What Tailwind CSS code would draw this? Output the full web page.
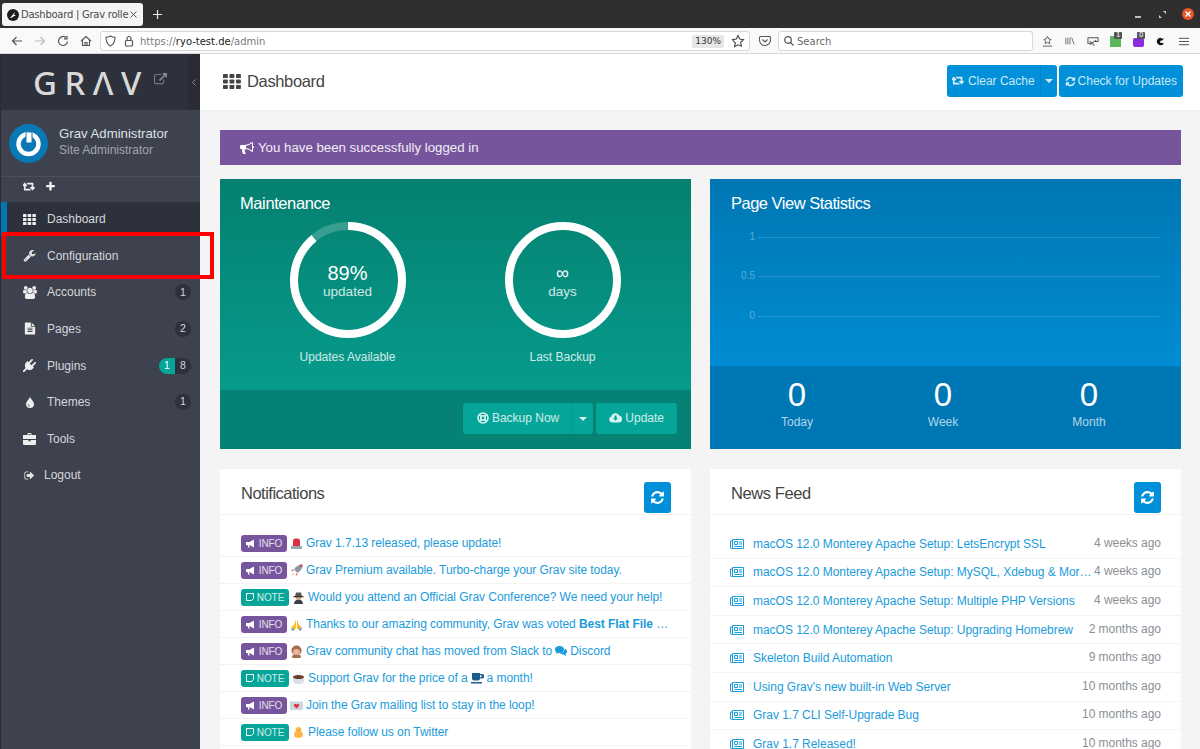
<!DOCTYPE html>
<html lang="en">
<head>
  <title>Dashboard | Grav</title>
  <meta charset="UTF-8">
  <script src="https://cdn.jsdelivr.net/npm/@tailwindcss/browser@4"></script>
</head>
<body class="h-[749px] w-[1200px] overflow-hidden relative flex flex-col bg-[#f4f4f4] font-['Liberation_Sans',sans-serif] text-[13px]">

  <!-- Browser title bar -->
  <div class="h-[28px] shrink-0 bg-[#2f2d2e] flex items-start pl-[2px] font-['DejaVu_Sans',sans-serif]">
    <div class="mt-[3px] w-[141px] h-[23px] bg-[#f5f5f5] rounded-[3px] flex items-center pl-[5px] pr-[6px] text-[10px] text-[#4a4a4a]">
      <svg class="w-[12px] h-[12px] shrink-0" viewBox="0 0 12 12"><circle cx="6" cy="6" r="6" fill="#1d1d1d"/><path d="M3 9 8 3 7 6 9 6 4 9z" fill="#fff"/></svg>
      <span class="ml-[2px] whitespace-nowrap tracking-[-0.25px] text-[#4a4a4a]">Dashboard | Grav rolle</span>
      <svg class="ml-auto w-[7px] h-[7px] shrink-0" viewBox="0 0 7 7" stroke="#555"><path d="M.5.5l6 6M6.5.5l-6 6"/></svg>
    </div>
    <svg class="ml-[10px] mt-[10px] w-[9px] h-[9px]" viewBox="0 0 9 9"><path d="M4.5 0v9M0 4.5h9" stroke="#e8e8e8" stroke-width="1.2"/></svg>
    <div class="ml-auto flex items-center mt-[8px] mr-[6px]">
      <div class="w-[6px] h-[2px] bg-[#bdbdbd] mt-[5px] mr-[18px]"></div>
      <svg class="w-[7px] h-[7px] mr-[16px]" viewBox="0 0 7 7"><path d="M4 0h3v3zM0 4l3 3H0z" fill="#d0d0d0"/></svg>
      <div class="w-[12px] h-[12px] rounded-full bg-[#e4572a] flex items-center justify-center">
        <svg class="w-[6px] h-[6px]" viewBox="0 0 6 6"><path d="M.5.5l5 5M5.500.5l-5 5" stroke="#fff" stroke-width="1.4"/></svg>
      </div>
    </div>
  </div>

  <!-- Browser toolbar -->
  <div class="h-[26px] shrink-0 bg-[#f9f9fa] border-b border-[#d8d8da] flex items-center pt-[1px] font-['DejaVu_Sans',sans-serif] text-[10px] text-[#5a5a5a]">
    <div class="w-[100px] shrink-0 flex items-center pl-[11px] gap-[11px]">
      <svg class="w-[12px] h-[12px]" viewBox="0 0 12 12" fill="none" stroke="#555" stroke-width="1.2"><path d="M11 6H1.500M5.500 2 1.500 6l4 4"/></svg>
      <svg class="w-[12px] h-[12px]" viewBox="0 0 12 12" fill="none" stroke="#bbb" stroke-width="1.2"><path d="M1 6h9.500M6.500 2l4 4-4 4"/></svg>
      <svg class="w-[12px] h-[12px]" viewBox="0 0 12 12" fill="none" stroke="#555" stroke-width="1.2"><path d="M10.500 6.500A4.500 4.500 0 1 1 9 2.600M10 .8v3H7"/></svg>
      <svg class="w-[12px] h-[12px]" viewBox="0 0 12 12" fill="none" stroke="#555" stroke-width="1.1"><path d="M1 6 6 1.500 11 6M2.500 5v5.500h7V5M5 10.500V7.500h2v3"/></svg>
    </div>
    <div class="w-[650px] h-[20px] bg-white border border-[#d8d8da] rounded-[3px] flex items-center pl-[4px] pr-[3px]">
      <svg class="w-[11px] h-[12px]" viewBox="0 0 11 12" fill="none" stroke="#555" stroke-width="1.1"><path d="M5.500 1C4 2 2.500 2.300 1 2.300c0 4.500 1.800 7.500 4.500 8.700C8.200 9.800 10 6.800 10 2.300 8.500 2.300 7 2 5.500 1z"/></svg>
      <svg class="ml-[8px] w-[10px] h-[12px]" viewBox="0 0 10 12" fill="none" stroke="#555" stroke-width="1.2"><rect x="1.500" y="5.500" width="7" height="5.500" rx="1"/><path d="M3 5.500V3.500a2 2 0 0 1 4 0v2"/></svg>
      <span class="ml-[6px] text-[#7a7a7a]">https://<span class="text-[#222]">ryo-test.de</span>/admin</span>
      <span class="ml-auto bg-[#e6e6e7] text-[#333] text-[9px] rounded-[2px] h-[13px] leading-[13px] px-[3px]">130%</span>
      <svg class="ml-[7px] mr-[1px] w-[14px] h-[14px]" viewBox="0 0 14 14" fill="none" stroke="#444" stroke-width="1.1"><path d="M7 1.500l1.700 3.600 3.800.5-2.800 2.700.7 3.900L7 10.800l-3.400 1.900.7-3.900L1.500 5.600l3.800-.5z"/></svg>
    </div>
    <svg class="ml-[9px] w-[12px] h-[12px]" viewBox="0 0 12 12" fill="none" stroke="#555" stroke-width="1.1"><path d="M1.500 1.500h9a1 1 0 0 1 1 1V5a5.500 5.500 0 0 1-11 0V2.500a1 1 0 0 1 1-1zM3.500 4.500 6 7l2.500-2.500"/></svg>
    <div class="ml-[7px] w-[255px] h-[20px] bg-white border border-[#d8d8da] rounded-[3px] flex items-center pl-[5px]">
      <svg class="w-[10px] h-[10px]" viewBox="0 0 10 10" fill="none" stroke="#555" stroke-width="1.2"><circle cx="4" cy="4" r="3.300"/><path d="M6.500 6.500 9.500 9.500"/></svg>
      <span class="ml-[3px] text-[#6a6a6a]">Search</span>
    </div>
    <div class="ml-[9px] flex items-center">
      <svg class="w-[11px] h-[13px]" viewBox="0 0 12 13" fill="none" stroke="#555"><path d="M6 1l1.400 2.800 2.600.4-2 2 .5 2.600L6 7.600 3.500 8.800 4 6.200l-2-2 2.600-.4zM1 11.500h10"/></svg>
      <svg class="ml-[12px] w-[10px] h-[10px]" viewBox="0 0 12 10" fill="none" stroke="#666" stroke-width="1.1"><path d="M1 1v8M3.500 1v8M6 1v8M8 1l3 8"/></svg>
      <svg class="ml-[12px] w-[12px] h-[12px]" viewBox="0 0 13 12" fill="none" stroke="#555" stroke-width="1.1"><path d="M1 2.500h11v4H8M1 2.500v6h3M3 10l7-5M3 6l5 5"/></svg>
      <div class="ml-[11px] relative w-[11px] h-[11px] bg-[#5cb85c]">
        <span class="absolute -top-[4px] left-[4px] bg-[#555] text-white text-[7px] leading-[7px] px-[2px] rounded-[1px]">1</span>
      </div>
      <div class="ml-[12px] relative w-[11px] h-[9px] mt-[2px] bg-[#8a2be2] rounded-[2px]">
        <span class="absolute -top-[6px] left-[4px] bg-[#555] text-white text-[7px] leading-[7px] px-[2px] rounded-[1px]">0</span>
      </div>
      <svg class="ml-[12px] w-[9px] h-[11px]" viewBox="0 0 11 11"><path d="M6 1c-3 0-5 2-5 4.500S3 10 6 10c2 0 3-1 3.500-2L7 7 5.500 7.500 5 5l3-1 1.500-1.500-1-1-1 .8z" fill="#111"/></svg>
      <svg class="ml-[14px] w-[10px] h-[9px]" viewBox="0 0 11 9" stroke="#555" stroke-width="1.1"><path d="M0 1h11M0 4.500h11M0 8h11"/></svg>
    </div>
  </div>

  <div class="flex-1 flex min-h-0">
    <!-- Sidebar -->
    <aside class="w-[200px] shrink-0 bg-[#3d424e] border-l border-[#2a2d35] text-[#d5d7db] flex flex-col">
      <div class="h-[56px] bg-[#2d313b] flex">
        <div class="flex-1 flex items-center pl-[32px]">
          <span aria-label="GRAV" class="font-['Noto_Sans',sans-serif] text-[33px] leading-none font-medium tracking-[7.5px] text-[#d9d9d9]">GRΛV</span>
          <svg class="ml-[5px] mt-[-6px] w-[13px] h-[13px]" viewBox="0 0 1792 1792" fill="#858892"><path d="M1408 928v320q0 119-84.500 203.500t-203.500 84.500h-832q-119 0-203.500-84.500t-84.500-203.500v-832q0-119 84.500-203.500t203.500-84.500h704q14 0 23 9t9 23v64q0 14-9 23t-23 9h-704q-66 0-113 47t-47 113v832q0 66 47 113t113 47h832q66 0 113-47t47-113v-320q0-14 9-23t23-9h64q14 0 23 9t9 23zm384-864v512q0 26-19 45t-45 19-45-19l-176-176-652 652q-10 10-23 10t-23-10l-114-114q-10-10-10-23t10-23l652-652-176-176q-19-19-19-45t19-45 45-19h512q26 0 45 19t19 45z"/></svg>
        </div>
        <div class="w-[12px] bg-[#292c35] flex items-center justify-center">
          <svg class="w-[4px] h-[7px]" viewBox="0 0 4 7" fill="none" stroke="#8b8e96"><path d="M3.500.5.500 3.500l3 3"/></svg>
        </div>
      </div>

      <div class="h-[67px] flex items-center pl-[8px] border-b border-[#4a4f5b]">
        <svg class="w-[39px] h-[39px] shrink-0" viewBox="0 0 39 39">
          <circle cx="19.500" cy="19.500" r="19.500" fill="#0b78b6"/>
          <circle cx="19.500" cy="20" r="10" fill="none" stroke="#fff" stroke-width="4.500"/>
          <rect x="17" y="8" width="6" height="11" rx="1.500" fill="#fff" stroke="#0b78b6" stroke-width="1"/>
        </svg>
        <div class="ml-[11px] mb-[3px]">
          <div class="text-[#dfe0e3] text-[13.2px] leading-[17px]">Grav Administrator</div>
          <div class="text-[#a3a6ad] text-[12px] leading-[16px]">Site Administrator</div>
        </div>
      </div>

      <div class="h-[25px] flex items-start pl-[22px] pt-[4px] gap-[9px]">
        <svg class="w-[13px] h-[12px]" viewBox="0 0 1920 1792" fill="#eee"><path d="M1152 1376q0 13-9.500 22.500t-22.500 9.500h-960q-8 0-13.500-2t-9-7-5.500-8-3-11.500-1-11.500v-600h-192q-26 0-45-19t-19-45q0-24 15-41l320-384q19-22 49-22t49 22l320 384q15 17 15 41 0 26-19 45t-45 19h-192v384h576q16 0 25 11l160 192q7 10 7 21zm640-416q0 24-15 41l-320 384q-20 23-49 23t-49-23l-320-384q-15-17-15-41 0-26 19-45t45-19h192v-384h-576q-16 0-25-12l-160-192q-7-9-7-20 0-13 9.500-22.500t22.500-9.500h960q8 0 13.500 2t9 7 5.500 8 3 11.500 1 11.500v600h192q26 0 45 19t19 45z"/></svg>
        <svg class="w-[11px] h-[11px]" viewBox="0 0 1792 1792" fill="#f2f2f2"><path d="M1600 736v192q0 40-28 68t-68 28h-416v416q0 40-28 68t-68 28h-192q-40 0-68-28t-28-68v-416h-416q-40 0-68-28t-28-68v-192q0-40 28-68t68-28h416v-416q0-40 28-68t68-28h192q40 0 68 28t28 68v416h416q40 0 68 28t28 68z"/></svg>
      </div>

      <nav class="text-[12px]">
        <div class="h-[34px] bg-[#2d313b] border-l-[6px] border-[#0077b5] flex items-center pl-[16px] mb-[1.5px]">
          <svg class="w-[13px] h-[11px] shrink-0" viewBox="0 0 13 11" fill="#eee"><rect width="3.500" height="3" rx=".5"/><rect x="4.700" width="3.500" height="3" rx=".5"/><rect x="9.400" width="3.500" height="3" rx=".5"/><rect y="4" width="3.500" height="3" rx=".5"/><rect x="4.700" y="4" width="3.500" height="3" rx=".5"/><rect x="9.400" y="4" width="3.500" height="3" rx=".5"/><rect y="8" width="3.500" height="3" rx=".5"/><rect x="4.700" y="8" width="3.500" height="3" rx=".5"/><rect x="9.400" y="8" width="3.500" height="3" rx=".5"/></svg>
          <span class="ml-[11px]">Dashboard</span>
        </div>
        <div class="h-[36.6px] flex items-center pl-[22px]">
          <svg class="w-[13px] h-[13px] shrink-0" viewBox="0 0 1792 1792" fill="#e4e4e4"><path d="M448 1472q0-26-19-45t-45-19-45 19-19 45 19 45 45 19 45-19 19-45zm644-420l-682 682q-37 37-90 37-52 0-91-37l-106-108q-38-36-38-90 0-53 38-91l681-681q39 98 114.500 173.500t173.500 114.500zm634-435q0 39-23 106-47 134-164.500 217.500t-258.500 83.500q-185 0-316.500-131.500t-131.500-316.500 131.500-316.500 316.500-131.500q58 0 121.500 16.500t107.500 46.500q16 11 16 28t-16 28l-293 169v224l193 107q5-3 79-48.500t135.500-81 70.500-35.500q15 0 23.500 10t8.500 25z"/></svg>
          <span class="ml-[11px]">Configuration</span>
        </div>
        <div class="h-[36.6px] flex items-center pl-[22px]">
          <svg class="w-[14px] h-[13px] shrink-0" viewBox="0 0 1920 1792" fill="#eee"><path d="M593 896q-162 5-265 128h-134q-82 0-138-40.500t-56-118.500q0-353 124-353 6 0 43.500 21t97.500 42.500 119 21.500q67 0 133-23-5 37-5 66 0 139 81 256zm1071 637q0 120-73 189.500t-194 69.500h-874q-121 0-194-69.500t-73-189.500q0-53 3.500-103.500t14-109 26.500-108.500 43-97.500 62-81 85.500-53.500 111.500-20q10 0 43 21.500t73 48 107 48 135 21.500 135-21.500 107-48 73-48 43-21.500q61 0 111.500 20t85.500 53.500 62 81 43 97.500 26.500 108.500 14 109 3.500 103.500zm-1024-1277q0 106-75 181t-181 75-181-75-75-181 75-181 181-75 181 75 75 181zm704 384q0 159-112.500 271.500t-271.500 112.500-271.500-112.500-112.500-271.500 112.500-271.500 271.500-112.500 271.500 112.500 112.500 271.500zm576 225q0 78-56 118.500t-138 40.500h-134q-103-123-265-128 81-117 81-256 0-29-5-66 66 23 133 23 59 0 119-21.500t97.500-42.500 43.500-21q124 0 124 353zm-128-609q0 106-75 181t-181 75-181-75-75-181 75-181 181-75 181 75 75 181z"/></svg>
          <span class="ml-[10px]">Accounts</span>
          <span class="ml-auto mr-[9px] w-[16px] h-[16px] rounded-full bg-[#2d313b] flex items-center justify-center text-[10.5px]">1</span>
        </div>
        <div class="h-[36.6px] flex items-center pl-[23px]">
          <svg class="w-[12px] h-[13px] shrink-0" viewBox="0 0 1792 1792" fill="#eee"><path d="M1596 476q14 14 28 36h-472v-472q22 14 36 28zm-476 164h544v1056q0 40-28 68t-68 28h-1344q-40 0-68-28t-28-68v-1600q0-40 28-68t68-28h800v544q0 40 28 68t68 28zm160 736v-64q0-14-9-23t-23-9h-704q-14 0-23 9t-9 23v64q0 14 9 23t23 9h704q14 0 23-9t9-23zm0-256v-64q0-14-9-23t-23-9h-704q-14 0-23 9t-9 23v64q0 14 9 23t23 9h704q14 0 23-9t9-23zm0-256v-64q0-14-9-23t-23-9h-704q-14 0-23 9t-9 23v64q0 14 9 23t23 9h704q14 0 23-9t9-23z"/></svg>
          <span class="ml-[11px]">Pages</span>
          <span class="ml-auto mr-[9px] w-[16px] h-[16px] rounded-full bg-[#2d313b] flex items-center justify-center text-[10.5px]">2</span>
        </div>
        <div class="h-[36.6px] flex items-center pl-[22px]">
          <svg class="w-[13px] h-[13px] shrink-0" viewBox="0 0 1792 1792" fill="#eee"><path d="M1755 453q37 38 37 90.500t-37 90.500l-401 400 150 150-160 160q-163 163-389.500 186.500t-411.500-100.500l-362 362h-181v-181l362-362q-124-185-100.500-411.500t186.500-389.500l160-160 150 150 400-401q38-37 91-37t90 37 37 90.500-37 90.500l-400 401 234 234 401-400q38-37 91-37t90 37z"/></svg>
          <span class="ml-[11px]">Plugins</span>
          <span class="ml-auto w-[16px] h-[16px] rounded-l-full bg-[#06a599] text-white flex items-center justify-center text-[10.5px]">1</span>
          <span class="mr-[9px] w-[16px] h-[16px] rounded-r-full bg-[#2d313b] flex items-center justify-center text-[10.5px]">8</span>
        </div>
        <div class="h-[36.6px] flex items-center pl-[25px]">
          <svg class="w-[8px] h-[11px] shrink-0" viewBox="0 0 8 11"><path d="M4 0c1 2.500 4 4.500 4 7a4 4 0 0 1-8 0C0 4.500 3 2.500 4 0z" fill="#eee"/><path d="M2 7.200a2 2 0 0 0 1.800 2" fill="none" stroke="#3d424e" stroke-width=".8"/></svg>
          <span class="ml-[13px]">Themes</span>
          <span class="ml-auto mr-[9px] w-[16px] h-[16px] rounded-full bg-[#2d313b] flex items-center justify-center text-[10.5px]">1</span>
        </div>
        <div class="h-[36.6px] flex items-center pl-[22px]">
          <svg class="w-[13px] h-[12px] shrink-0" viewBox="0 0 13 12" fill="#eee"><path d="M4.500 2V1a1 1 0 0 1 1-1h2a1 1 0 0 1 1 1v1H13v4H0V2zM5.500 1v1h2V1zM0 7h5.500v1.200h2V7H13v4a1 1 0 0 1-1 1H1a1 1 0 0 1-1-1z"/></svg>
          <span class="ml-[11px]">Tools</span>
        </div>
        <div class="h-[36.6px] flex items-center pl-[23px]">
          <svg class="w-[11px] h-[11px] shrink-0" viewBox="0 0 1792 1792" fill="#e4e4e4"><path d="M704 1440q0 4 1 20t.5 26.500-3 23.500-10 19.500-20.500 6.500h-320q-119 0-203.500-84.500t-84.500-203.500v-704q0-119 84.500-203.500t203.500-84.500h320q13 0 22.500 9.500t9.500 22.500q0 4 1 20t.5 26.500-3 23.500-10 19.500-20.500 6.500h-320q-66 0-113 47t-47 113v704q0 66 47 113t113 47h312l11.500 1 11.500 3 8 5.500 7 9 2 13.500zm928-544q0 26-19 45l-544 544q-19 19-45 19t-45-19-19-45v-288h-448q-26 0-45-19t-19-45v-384q0-26 19-45t45-19h448v-288q0-26 19-45t45-19 45 19l544 544q19 19 19 45z"/></svg>
          <span class="ml-[9px]">Logout</span>
        </div>
      </nav>
    </aside>

    <!-- Main -->
    <main class="flex-1 min-w-0 flex flex-col">
      <div class="h-[56px] shrink-0 bg-white flex items-center pl-[23px] pr-[17px] shadow-[0_1px_2px_rgba(0,0,0,0.04)]">
        <svg class="w-[18px] h-[15px] mb-[2px]" viewBox="0 0 13 11" fill="#444" preserveAspectRatio="none"><rect width="3.500" height="3" rx=".5"/><rect x="4.700" width="3.500" height="3" rx=".5"/><rect x="9.400" width="3.500" height="3" rx=".5"/><rect y="4" width="3.500" height="3" rx=".5"/><rect x="4.700" y="4" width="3.500" height="3" rx=".5"/><rect x="9.400" y="4" width="3.500" height="3" rx=".5"/><rect y="8" width="3.500" height="3" rx=".5"/><rect x="4.700" y="8" width="3.500" height="3" rx=".5"/><rect x="9.400" y="8" width="3.500" height="3" rx=".5"/></svg>
        <h1 class="ml-[6px] mb-[2px] text-[16.5px] text-[#444] tracking-[-0.35px]">Dashboard</h1>
        <div class="ml-auto flex items-center text-[#c9e8f7] text-[12px] mb-[2px]">
          <div class="h-[32px] bg-[#0090d9] rounded-l-[3px] flex items-center pl-[5px] pr-[5px]">
            <svg class="w-[13px] h-[12px]" viewBox="0 0 1920 1792" fill="#d6eefa"><path d="M1152 1376q0 13-9.500 22.500t-22.500 9.500h-960q-8 0-13.500-2t-9-7-5.500-8-3-11.500-1-11.500v-600h-192q-26 0-45-19t-19-45q0-24 15-41l320-384q19-22 49-22t49 22l320 384q15 17 15 41 0 26-19 45t-45 19h-192v384h576q16 0 25 11l160 192q7 10 7 21zm640-416q0 24-15 41l-320 384q-20 23-49 23t-49-23l-320-384q-15-17-15-41 0-26 19-45t45-19h192v-384h-576q-16 0-25-12l-160-192q-7-9-7-20 0-13 9.500-22.500t22.500-9.500h960q8 0 13.500 2t9 7 5.500 8 3 11.500 1 11.500v600h192q26 0 45 19t19 45z"/></svg>
            <span class="ml-[3px]">Clear Cache</span>
          </div>
          <div class="h-[32px] w-[17px] bg-[#0090d9] border-l border-[#0084c8] rounded-r-[3px] flex items-center justify-center">
            <div class="border-x-[4px] border-x-transparent border-t-[4px] border-t-[#d6eefa]"></div>
          </div>
          <div class="ml-[2px] h-[32px] bg-[#0090d9] rounded-[3px] flex items-center px-[6px]">
            <svg class="w-[11px] h-[11px]" viewBox="0 0 1792 1792" fill="#d6eefa"><path d="M1639 1056q0 5-1 7-64 268-268 434.500t-478 166.500q-146 0-282.500-55t-243.500-157l-129 129q-19 19-45 19t-45-19-19-45v-448q0-26 19-45t45-19h448q26 0 45 19t19 45-19 45l-137 137q71 66 161 102t187 36q134 0 250-65t186-179q11-17 53-117 8-23 30-23h192q13 0 22.500 9.500t9.500 22.500zm25-800v448q0 26-19 45t-45 19h-448q-26 0-45-19t-19-45 19-45l138-138q-148-137-349-137-134 0-250 65t-186 179q-11 17-53 117-8 23-30 23h-199q-13 0-22.500-9.500t-9.500-22.500v-7q65-268 270-434.500t480-166.500q146 0 284 55.500t245 156.500l130-129q19-19 45-19t45 19 19 45z"/></svg>
            <span class="ml-[2px]">Check for Updates</span>
          </div>
        </div>
      </div>

      <div class="pl-[20px] pr-[19px] pt-[20px] flex flex-col">
        <div class="h-[35px] bg-[#77559d] flex items-center pl-[20px] pt-[1px] text-white/90 text-[13.25px]">
          <svg class="w-[14px] h-[14px]" viewBox="0 0 1792 1792" fill="#fff"><path d="M1664 640q53 0 90.500 37.500t37.500 90.500-37.500 90.500-90.500 37.500v384q0 52-38 90t-90 38q-417-347-812-380-58 19-91 66t-31 100.500 40 92.500q-20 33-23 65.500t6 58 33.500 55 48 50 61.500 50.500q-29 58-111.500 83t-168.500 11.500-132-55.500q-7-23-29.500-87.500t-32-94.500-23-89-15-101 3.500-98.500 22-110.500h-122q-66 0-113-47t-47-113v-192q0-66 47-113t113-47h480q435 0 896-384 52 0 90 38t38 90v384zm-128 604v-954q-394 302-768 343v270q377 42 768 341z"/></svg>
          <span class="ml-[4px]">You have been successfully logged in</span>
        </div>

        <div class="mt-[14px] flex justify-between">
          <!-- Maintenance -->
          <section class="w-[471px] h-[270px] flex flex-col text-white">
            <div class="h-[211px] bg-gradient-to-b from-[#05806f] to-[#069b8c] pl-[20px] pr-[21px] pt-[15px]">
              <h2 class="text-[16.5px] leading-[18px] tracking-[-0.4px]">Maintenance</h2>
              <div class="flex mt-[9px]">
                <div class="ml-[12px] w-[191px] flex flex-col items-center">
                  <div class="relative w-[118px] h-[118px]">
                    <svg class="w-[118px] h-[118px]" viewBox="0 0 118 118" fill="none" stroke-width="8">
                      <circle cx="59" cy="59" r="54" stroke="#ffffff" stroke-opacity="0.2"/>
                      <circle cx="59" cy="59" r="54" stroke="#fff" stroke-dasharray="302 340" transform="rotate(-90 59 59)"/>
                    </svg>
                    <div class="absolute inset-0 flex flex-col items-center justify-center">
                      <span class="text-[20px] leading-[18px] mt-[4px]">89%</span>
                      <span class="text-white/80 text-[13.5px] leading-[16px] mt-[2px]">updated</span>
                    </div>
                  </div>
                  <div class="mt-[9px] text-white/80 text-[12px]">Updates Available</div>
                </div>
                <div class="ml-[24px] w-[191px] flex flex-col items-center">
                  <div class="relative w-[118px] h-[118px]">
                    <svg class="w-[118px] h-[118px]" viewBox="0 0 118 118" fill="none" stroke-width="8">
                      <circle cx="59" cy="59" r="54" stroke="#fff"/>
                    </svg>
                    <div class="absolute inset-0 flex flex-col items-center justify-center">
                      <span class="text-[18px] leading-[18px] mt-[4px]">∞</span>
                      <span class="text-white/80 text-[13.5px] leading-[16px] mt-[2px]">days</span>
                    </div>
                  </div>
                  <div class="mt-[9px] text-white/80 text-[12px]">Last Backup</div>
                </div>
              </div>
            </div>
            <div class="flex-1 bg-[#068274] flex items-center justify-end pr-[14px] pb-[2px] text-white/80 text-[12px]">
              <div class="h-[31px] bg-[#06a599] rounded-l-[3px] flex items-center pl-[14px] pr-[13px] pb-[2px]">
                <svg class="w-[12px] h-[12px]" viewBox="0 0 12 12" fill="none" stroke="#d8f3f0" stroke-width="1.6"><circle cx="6" cy="6" r="5"/><circle cx="6" cy="6" r="2.200"/><path d="M2.500 2.500l2 2M9.500 2.500l-2 2M2.500 9.500l2-2M9.500 9.500l-2-2"/></svg>
                <span class="ml-[3px]">Backup Now</span>
              </div>
              <div class="h-[31px] w-[21px] bg-[#06a599] border-l border-[#06968a] rounded-r-[3px] flex items-center justify-center">
                <div class="border-x-[4px] border-x-transparent border-t-[4px] border-t-[#d8f3f0]"></div>
              </div>
              <div class="ml-[3px] h-[31px] bg-[#06a599] rounded-[3px] flex items-center px-[13px] pb-[2px]">
                <svg class="w-[13px] h-[11px]" viewBox="0 0 13 11"><path d="M3 10.500a3 3 0 0 1-.6-5.900A4.300 4.300 0 0 1 10.500 3.800 3.400 3.400 0 0 1 10 10.500z" fill="#d8f3f0"/><path d="M5.500 3.500h2v2.500H9L6.500 8.700 4 6h1.500z" fill="#06a599"/></svg>
                <span class="ml-[3px]">Update</span>
              </div>
            </div>
          </section>

          <!-- Page View Statistics -->
          <section class="w-[471px] h-[270px] flex flex-col text-white">
            <div class="h-[187px] bg-gradient-to-b from-[#0077b3] to-[#008cd2] px-[21px] pt-[15px]">
              <h2 class="text-[16.5px] leading-[18px] tracking-[-0.5px]">Page View Statistics</h2>
              <div class="mt-[25px] text-[10px] text-white/35">
                <div class="h-[39.3px] flex items-start">
                  <span class="w-[24px] text-right -mt-[8px]">1</span>
                  <div class="ml-[4px] flex-1 border-t border-dotted border-white/30"></div>
                </div>
                <div class="h-[39.3px] flex items-start">
                  <span class="w-[24px] text-right -mt-[8px]">0.5</span>
                  <div class="ml-[4px] flex-1 border-t border-dotted border-white/30"></div>
                </div>
                <div class="h-[39.3px] flex items-start">
                  <span class="w-[24px] text-right -mt-[8px]">0</span>
                  <div class="ml-[4px] flex-1 border-t border-dotted border-white/30"></div>
                </div>
              </div>
            </div>
            <div class="flex-1 bg-[#0077b5] grid grid-cols-3 pl-[14px] pr-[19px] pt-[10px] text-center">
              <div><div class="text-[33px] leading-[37px]">0</div><div class="text-white/70 text-[12px] leading-[16px] mt-[1px]">Today</div></div>
              <div><div class="text-[33px] leading-[37px]">0</div><div class="text-white/70 text-[12px] leading-[16px] mt-[1px]">Week</div></div>
              <div><div class="text-[33px] leading-[37px]">0</div><div class="text-white/70 text-[12px] leading-[16px] mt-[1px]">Month</div></div>
            </div>
          </section>
        </div>

        <div class="mt-[20px] flex justify-between">
          <!-- Notifications -->
          <section class="w-[471px] h-[300px] bg-white">
            <div class="h-[46px] border-b border-[#f1f1f1] flex items-start pl-[21px] pr-[20px]">
              <h2 class="mt-[15px] text-[16.5px] leading-[18px] text-[#444] tracking-[-0.5px]">Notifications</h2>
              <div class="ml-auto mt-[13px] w-[27px] h-[31px] bg-[#0090d9] rounded-[3px] flex items-center justify-center">
                <svg class="w-[15px] h-[15px]" viewBox="0 0 1792 1792" fill="#fff"><path d="M1639 1056q0 5-1 7-64 268-268 434.500t-478 166.500q-146 0-282.500-55t-243.500-157l-129 129q-19 19-45 19t-45-19-19-45v-448q0-26 19-45t45-19h448q26 0 45 19t19 45-19 45l-137 137q71 66 161 102t187 36q134 0 250-65t186-179q11-17 53-117 8-23 30-23h192q13 0 22.500 9.500t9.500 22.500zm25-800v448q0 26-19 45t-45 19h-448q-26 0-45-19t-19-45 19-45l138-138q-148-137-349-137-134 0-250 65t-186 179q-11 17-53 117-8 23-30 23h-199q-13 0-22.500-9.500t-9.500-22.500v-7q65-268 270-434.500t480-166.500q146 0 284 55.500t245 156.500l130-129q19-19 45-19t45 19 19 45z"/></svg>
              </div>
            </div>
            <ul class="pt-[15px] text-[12px] tracking-[-0.06px] text-[#1a9bdb]">
              <li class="h-[27px] border-b border-[#f3f3f3] flex items-center pl-[21px] whitespace-nowrap">
                <span class="h-[17px] w-[46px] bg-[#77559d] rounded-[3px] text-white/80 text-[10px] flex items-center justify-center gap-[3px]"><svg class="w-[10px] h-[9px]" viewBox="0 0 10 9"><path d="M0 3h3.500L8 .5v8L3.500 6H3l.8 2.500H2.300L1.500 6H0z" fill="#fff"/></svg>INFO</span>
                <svg class="ml-[3px] w-[13px] h-[13px] shrink-0" viewBox="0 0 13 13"><path d="M3 9V4a2.500 2.500 0 0 1 2.500-2.500h2A2.500 2.500 0 0 1 10 4v5z" fill="#dd2e44"/><rect x="1" y="9" width="11" height="3" rx=".5" fill="#99aab5"/></svg>
                <span class="ml-[3px]">Grav 1.7.13 released, please update!</span>
              </li>
              <li class="h-[27px] border-b border-[#f3f3f3] flex items-center pl-[21px] whitespace-nowrap">
                <span class="h-[17px] w-[46px] bg-[#77559d] rounded-[3px] text-white/80 text-[10px] flex items-center justify-center gap-[3px]"><svg class="w-[10px] h-[9px]" viewBox="0 0 10 9"><path d="M0 3h3.500L8 .5v8L3.500 6H3l.8 2.500H2.300L1.500 6H0z" fill="#fff"/></svg>INFO</span>
                <svg class="ml-[3px] w-[13px] h-[13px] shrink-0" viewBox="0 0 13 13"><path d="M12.500.5C9 .5 6 2 4 5.500L7.500 9c3.500-2 5-5 5-8.500z" fill="#8b98a8"/><path d="M4 5.500 1.500 6l1 1.500zM7.500 9 7 11.500 5.500 10.500z" fill="#dd2e44"/><path d="M3.500 9 1 12l3-2.500z" fill="#f4900c"/><path d="M12.500.5 9.500 1 12 3.500z" fill="#dd2e44"/></svg>
                <span class="ml-[3px]">Grav Premium available. Turbo-charge your Grav site today.</span>
              </li>
              <li class="h-[27px] border-b border-[#f3f3f3] flex items-center pl-[21px] whitespace-nowrap">
                <span class="h-[17px] w-[48px] bg-[#06a599] rounded-[3px] text-white/80 text-[10px] flex items-center justify-center gap-[3px]"><svg class="w-[8px] h-[8px]" viewBox="0 0 8 8" fill="none" stroke="#fff"><path d="M.5.500h7v5l-2 2h-5z"/></svg>NOTE</span>
                <svg class="ml-[3px] w-[13px] h-[13px] shrink-0" viewBox="0 0 13 13"><path d="M2 13c0-3 2-4.500 4.500-4.500S11 10 11 13z" fill="#3a3f47"/><circle cx="6.500" cy="6" r="3" fill="#c9a27e"/><path d="M3 5.500 4 1.500h5l1 4z" fill="#555"/><rect x="1.500" y="5" width="10" height="1.200" fill="#333"/></svg>
                <span class="ml-[3px]">Would you attend an Official Grav Conference? We need your help!</span>
              </li>
              <li class="h-[27px] border-b border-[#f3f3f3] flex items-center pl-[21px] whitespace-nowrap">
                <span class="h-[17px] w-[46px] bg-[#77559d] rounded-[3px] text-white/80 text-[10px] flex items-center justify-center gap-[3px]"><svg class="w-[10px] h-[9px]" viewBox="0 0 10 9"><path d="M0 3h3.500L8 .5v8L3.500 6H3l.8 2.500H2.300L1.500 6H0z" fill="#fff"/></svg>INFO</span>
                <svg class="ml-[3px] w-[13px] h-[13px] shrink-0" viewBox="0 0 13 13"><path d="M6 1 4.500 6 1 10l2 2.500 3-2z" fill="#fcc21b"/><path d="M7 1 8.500 6 12 10l-2 2.500-3-2z" fill="#f9b233"/><path d="M1 10.500h3v2H2z" fill="#5b9bd5"/><path d="M9 10.500h3l-1 2H9z" fill="#5b9bd5"/></svg>
                <span class="ml-[3px]">Thanks to our amazing community, Grav was voted <b>Best Flat File</b> …</span>
              </li>
              <li class="h-[27px] border-b border-[#f3f3f3] flex items-center pl-[21px] whitespace-nowrap">
                <span class="h-[17px] w-[46px] bg-[#77559d] rounded-[3px] text-white/80 text-[10px] flex items-center justify-center gap-[3px]"><svg class="w-[10px] h-[9px]" viewBox="0 0 10 9"><path d="M0 3h3.500L8 .5v8L3.500 6H3l.8 2.500H2.300L1.500 6H0z" fill="#fff"/></svg>INFO</span>
                <svg class="ml-[3px] w-[13px] h-[13px] shrink-0" viewBox="0 0 13 13"><circle cx="6.500" cy="5.500" r="5" fill="#a56a4b"/><ellipse cx="6.500" cy="7" rx="3.500" ry="3" fill="#e8b796"/><rect x="2" y="10" width="9" height="3" rx="1.500" fill="#a56a4b"/></svg>
                <span class="ml-[3px]">Grav community chat has moved from Slack to</span>
                <svg class="ml-[3px] w-[12px] h-[10px] shrink-0" viewBox="0 0 12 10" fill="#1a9bdb"><ellipse cx="4.500" cy="3.500" rx="4.500" ry="3.500"/><path d="M2 5.500 1 8l3-1.500z"/><path d="M9.700 2.600C11.200 3.200 12 4.200 12 5.500c0 1-.6 1.900-1.500 2.400L11 10 8.500 8.500C7 8.600 5.500 8 4.800 7.300 7.500 7.300 10 5.500 9.700 2.600z"/></svg>
                <span class="ml-[3px]">Discord</span>
              </li>
              <li class="h-[27px] border-b border-[#f3f3f3] flex items-center pl-[21px] whitespace-nowrap">
                <span class="h-[17px] w-[48px] bg-[#06a599] rounded-[3px] text-white/80 text-[10px] flex items-center justify-center gap-[3px]"><svg class="w-[8px] h-[8px]" viewBox="0 0 8 8" fill="none" stroke="#fff"><path d="M.5.500h7v5l-2 2h-5z"/></svg>NOTE</span>
                <svg class="ml-[3px] w-[13px] h-[13px] shrink-0" viewBox="0 0 13 13"><path d="M1 5h11v3a4 4 0 0 1-4 4H5a4 4 0 0 1-4-4z" fill="#d9dfe3"/><ellipse cx="6.500" cy="5" rx="5.500" ry="2" fill="#6b3f2a"/><path d="M5 .5c1 1 0 1.500.5 2.500M8 .5c1 1 0 1.500.5 2.500" stroke="#ccd3d8" fill="none"/></svg>
                <span class="ml-[3px]">Support Grav for the price of a</span>
                <svg class="ml-[3px] w-[13px] h-[11px] shrink-0" viewBox="0 0 13 11" fill="#1c5d8c"><path d="M1 0h8v5.500a2 2 0 0 1-2 2H3a2 2 0 0 1-2-2zM9 1h2a1.500 1.500 0 0 1 0 4.500H9V4.300h1.500V2.200H9zM0 9h11v1.500H0z"/></svg>
                <span class="ml-[3px]">a month!</span>
              </li>
              <li class="h-[27px] border-b border-[#f3f3f3] flex items-center pl-[21px] whitespace-nowrap">
                <span class="h-[17px] w-[46px] bg-[#77559d] rounded-[3px] text-white/80 text-[10px] flex items-center justify-center gap-[3px]"><svg class="w-[10px] h-[9px]" viewBox="0 0 10 9"><path d="M0 3h3.500L8 .5v8L3.500 6H3l.8 2.500H2.300L1.500 6H0z" fill="#fff"/></svg>INFO</span>
                <svg class="ml-[3px] w-[13px] h-[13px] shrink-0" viewBox="0 0 13 13"><rect y="2.500" width="13" height="8.500" fill="#ccd6dd"/><path d="M6.500 9.500 4 7a1.400 1.400 0 0 1 2.500-1.300A1.400 1.400 0 0 1 9 7z" fill="#dd2e44"/></svg>
                <span class="ml-[3px]">Join the Grav mailing list to stay in the loop!</span>
              </li>
              <li class="h-[27px] border-b border-[#f3f3f3] flex items-center pl-[21px] whitespace-nowrap">
                <span class="h-[17px] w-[48px] bg-[#06a599] rounded-[3px] text-white/80 text-[10px] flex items-center justify-center gap-[3px]"><svg class="w-[8px] h-[8px]" viewBox="0 0 8 8" fill="none" stroke="#fff"><path d="M.5.500h7v5l-2 2h-5z"/></svg>NOTE</span>
                <svg class="ml-[3px] w-[13px] h-[13px] shrink-0" viewBox="0 0 13 13"><circle cx="6.500" cy="4" r="3" fill="#fdb84a"/><ellipse cx="6.500" cy="8.500" rx="4.500" ry="3.500" fill="#fdb84a"/><path d="M5.500 4h2L6.500 5.500z" fill="#e07b00"/></svg>
                <span class="ml-[3px]">Please follow us on Twitter</span>
              </li>
            </ul>
          </section>

          <!-- News Feed -->
          <section class="w-[471px] h-[300px] bg-white">
            <div class="h-[46px] border-b border-[#f1f1f1] flex items-start pl-[21px] pr-[20px]">
              <h2 class="mt-[15px] text-[16.5px] leading-[18px] text-[#444] tracking-[-0.4px]">News Feed</h2>
              <div class="ml-auto mt-[13px] w-[27px] h-[31px] bg-[#0090d9] rounded-[3px] flex items-center justify-center">
                <svg class="w-[15px] h-[15px]" viewBox="0 0 1792 1792" fill="#fff"><path d="M1639 1056q0 5-1 7-64 268-268 434.500t-478 166.500q-146 0-282.500-55t-243.500-157l-129 129q-19 19-45 19t-45-19-19-45v-448q0-26 19-45t45-19h448q26 0 45 19t19 45-19 45l-137 137q71 66 161 102t187 36q134 0 250-65t186-179q11-17 53-117 8-23 30-23h192q13 0 22.500 9.500t9.500 22.500zm25-800v448q0 26-19 45t-45 19h-448q-26 0-45-19t-19-45 19-45l138-138q-148-137-349-137-134 0-250 65t-186 179q-11 17-53 117-8 23-30 23h-199q-13 0-22.500-9.500t-9.500-22.500v-7q65-268 270-434.500t480-166.500q146 0 284 55.500t245 156.500l130-129q19-19 45-19t45 19 19 45z"/></svg>
              </div>
            </div>
            <ul class="pt-[15px] text-[12px] tracking-[-0.03px] text-[#1a9bdb]">
              <li class="h-[28.6px] border-b border-[#f3f3f3] flex items-center pl-[20px] pr-[20px] whitespace-nowrap">
                <svg class="w-[14px] h-[10px] shrink-0" viewBox="0 0 14 10" fill="none" stroke="#1a9bdb"><path d="M2.500.5h11v9h-11zM2.500 2H.5v6.500a1 1 0 0 0 1 1h1M4.500 2.500h3v3h-3zM9 3h3M9 5h3M4.500 7.500H12"/></svg>
                <span class="ml-[9px]">macOS 12.0 Monterey Apache Setup: LetsEncrypt SSL</span>
                <span class="text-[#8a8f96] ml-auto -mt-[2px]">4 weeks ago</span>
              </li>
              <li class="h-[28.6px] border-b border-[#f3f3f3] flex items-center pl-[20px] pr-[20px] whitespace-nowrap">
                <svg class="w-[14px] h-[10px] shrink-0" viewBox="0 0 14 10" fill="none" stroke="#1a9bdb"><path d="M2.500.5h11v9h-11zM2.500 2H.5v6.500a1 1 0 0 0 1 1h1M4.500 2.500h3v3h-3zM9 3h3M9 5h3M4.500 7.500H12"/></svg>
                <span class="ml-[9px]">macOS 12.0 Monterey Apache Setup: MySQL, Xdebug &amp; Mor…</span>
                <span class="text-[#8a8f96] ml-auto -mt-[2px]">4 weeks ago</span>
              </li>
              <li class="h-[28.6px] border-b border-[#f3f3f3] flex items-center pl-[20px] pr-[20px] whitespace-nowrap">
                <svg class="w-[14px] h-[10px] shrink-0" viewBox="0 0 14 10" fill="none" stroke="#1a9bdb"><path d="M2.500.5h11v9h-11zM2.500 2H.5v6.500a1 1 0 0 0 1 1h1M4.500 2.500h3v3h-3zM9 3h3M9 5h3M4.500 7.500H12"/></svg>
                <span class="ml-[9px]">macOS 12.0 Monterey Apache Setup: Multiple PHP Versions</span>
                <span class="text-[#8a8f96] ml-auto -mt-[2px]">4 weeks ago</span>
              </li>
              <li class="h-[28.6px] border-b border-[#f3f3f3] flex items-center pl-[20px] pr-[20px] whitespace-nowrap">
                <svg class="w-[14px] h-[10px] shrink-0" viewBox="0 0 14 10" fill="none" stroke="#1a9bdb"><path d="M2.500.5h11v9h-11zM2.500 2H.5v6.500a1 1 0 0 0 1 1h1M4.500 2.500h3v3h-3zM9 3h3M9 5h3M4.500 7.500H12"/></svg>
                <span class="ml-[9px]">macOS 12.0 Monterey Apache Setup: Upgrading Homebrew</span>
                <span class="text-[#8a8f96] ml-auto -mt-[2px]">2 months ago</span>
              </li>
              <li class="h-[28.6px] border-b border-[#f3f3f3] flex items-center pl-[20px] pr-[20px] whitespace-nowrap">
                <svg class="w-[14px] h-[10px] shrink-0" viewBox="0 0 14 10" fill="none" stroke="#1a9bdb"><path d="M2.500.5h11v9h-11zM2.500 2H.5v6.500a1 1 0 0 0 1 1h1M4.500 2.500h3v3h-3zM9 3h3M9 5h3M4.500 7.500H12"/></svg>
                <span class="ml-[9px]">Skeleton Build Automation</span>
                <span class="text-[#8a8f96] ml-auto -mt-[2px]">9 months ago</span>
              </li>
              <li class="h-[28.6px] border-b border-[#f3f3f3] flex items-center pl-[20px] pr-[20px] whitespace-nowrap">
                <svg class="w-[14px] h-[10px] shrink-0" viewBox="0 0 14 10" fill="none" stroke="#1a9bdb"><path d="M2.500.5h11v9h-11zM2.500 2H.5v6.500a1 1 0 0 0 1 1h1M4.500 2.500h3v3h-3zM9 3h3M9 5h3M4.500 7.500H12"/></svg>
                <span class="ml-[9px]">Using Grav's new built-in Web Server</span>
                <span class="text-[#8a8f96] ml-auto -mt-[2px]">10 months ago</span>
              </li>
              <li class="h-[28.6px] border-b border-[#f3f3f3] flex items-center pl-[20px] pr-[20px] whitespace-nowrap">
                <svg class="w-[14px] h-[10px] shrink-0" viewBox="0 0 14 10" fill="none" stroke="#1a9bdb"><path d="M2.500.5h11v9h-11zM2.500 2H.5v6.500a1 1 0 0 0 1 1h1M4.500 2.500h3v3h-3zM9 3h3M9 5h3M4.500 7.500H12"/></svg>
                <span class="ml-[9px]">Grav 1.7 CLI Self-Upgrade Bug</span>
                <span class="text-[#8a8f96] ml-auto -mt-[2px]">10 months ago</span>
              </li>
              <li class="h-[28.6px] border-b border-[#f3f3f3] flex items-center pl-[20px] pr-[20px] whitespace-nowrap">
                <svg class="w-[14px] h-[10px] shrink-0" viewBox="0 0 14 10" fill="none" stroke="#1a9bdb"><path d="M2.500.5h11v9h-11zM2.500 2H.5v6.500a1 1 0 0 0 1 1h1M4.500 2.500h3v3h-3zM9 3h3M9 5h3M4.500 7.500H12"/></svg>
                <span class="ml-[9px]">Grav 1.7 Released!</span>
                <span class="text-[#8a8f96] ml-auto -mt-[2px]">10 months ago</span>
              </li>
            </ul>
          </section>
        </div>
      </div>
    </main>
  </div>

  <!-- Red annotation box drawn over the screenshot -->
  <div class="absolute left-[2px] top-[232px] w-[212px] h-[47px] border-[4px] border-[#fe0000] pointer-events-none"></div>
</body>
</html>
